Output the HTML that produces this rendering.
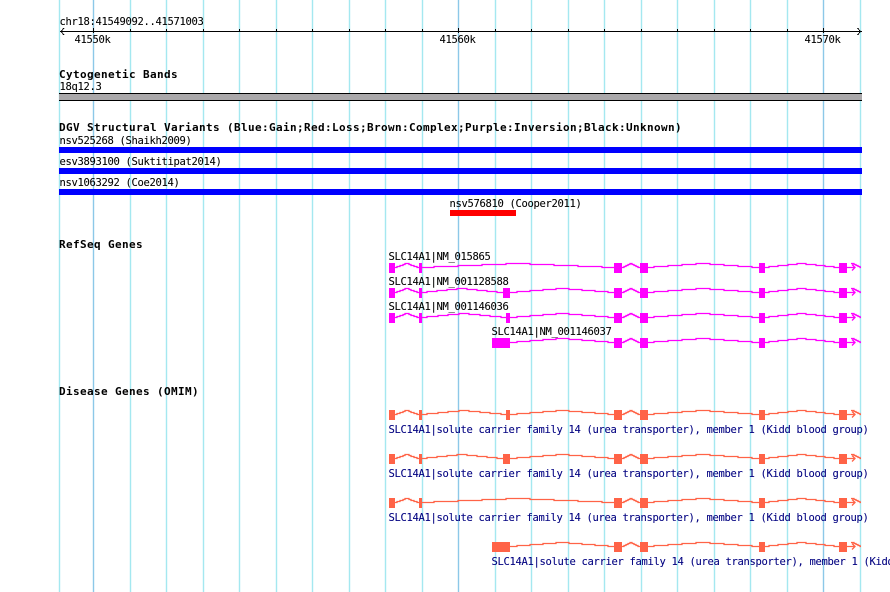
<!DOCTYPE html>
<html>
<head>
<meta charset="utf-8">
<title>chr18:41549092..41571003</title>
<style>
html,body{margin:0;padding:0;background:#fff;width:890px;height:592px;overflow:hidden}
svg{display:block;position:absolute;left:0;top:0}
text{font-family:"DejaVu Sans Mono","Liberation Mono",monospace;font-size:10.5px;letter-spacing:-.321px;fill:#000;stroke:#000;stroke-width:.08px;white-space:pre}
text.b{font-weight:bold;font-size:11px;letter-spacing:.378px;stroke-width:0}
text.n{fill:#000080;stroke:#000080}
</style>
</head>
<body>
<svg width="890" height="592" viewBox="0 0 890 592" xmlns="http://www.w3.org/2000/svg">
<defs>
<g id="tail">
<path d="M614 0h8v10h-8zM640 0h8v10h-8zM759 0h6v10h-6zM839 0h8v10h-8z" fill="currentColor" shape-rendering="crispEdges"/>
<path d="M622 4.5H624V3.5H626V2.5H628V1.5H630V.5H632V1.5H634V2.5H636V3.5H638V4.5H640M648 4.5H654V3.5H668V2.5H682V1.5H696V.5H710V1.5H724V2.5H738V3.5H752V4.5H759M765 4.5H769V3.5H778V2.5H788V1.5H797V.5H806V1.5H816V2.5H825V3.5H834V4.5H839M847 4.5H855M851 .5H854V1.5H856V2.5H858V3.5H860V4.5H861M852 1.5L855 4.5L852 7.5" fill="none" stroke="currentColor" stroke-width="1.3"/>
</g>
<g id="head">
<path d="M389 0h6v10h-6zM419 0h3v10h-3z" fill="currentColor" shape-rendering="crispEdges"/>
<path d="M395 4.5H397V3.5H400V2.5H403V1.5H405V.5H409V1.5H411V2.5H414V3.5H417V4.5H419" fill="none" stroke="currentColor" stroke-width="1.3"/>
</g>
<g id="a">
<use href="#head"/><use href="#tail"/>
<path d="M422 4.5H434V3.5H458V2.5H482V1.5H506V.5H530V1.5H554V2.5H578V3.5H602V4.5H614" fill="none" stroke="currentColor" stroke-width="1.3"/>
</g>
<g id="b">
<use href="#head"/><use href="#tail"/>
<path d="M503 0h7v10h-7z" fill="currentColor" shape-rendering="crispEdges"/>
<path d="M422 4.5H427V3.5H437V2.5H447V1.5H457V.5H467V1.5H477V2.5H487V3.5H497V4.5H503M510 4.5H517V3.5H530V2.5H543V1.5H556V.5H569V1.5H582V2.5H595V3.5H608V4.5H614" fill="none" stroke="currentColor" stroke-width="1.3"/>
</g>
<g id="c">
<use href="#head"/><use href="#tail"/>
<path d="M506 0h4v10h-4z" fill="currentColor" shape-rendering="crispEdges"/>
<path d="M422 4.5H427V3.5H438V2.5H448V1.5H459V.5H469V1.5H480V2.5H490V3.5H501V4.5H506M510 4.5H517V3.5H530V2.5H543V1.5H556V.5H569V1.5H582V2.5H595V3.5H608V4.5H614" fill="none" stroke="currentColor" stroke-width="1.3"/>
</g>
<g id="d">
<use href="#tail"/>
<path d="M492 0h18v10h-18z" fill="currentColor" shape-rendering="crispEdges"/>
<path d="M510 4.5H517V3.5H530V2.5H543V1.5H556V.5H569V1.5H582V2.5H595V3.5H608V4.5H614" fill="none" stroke="currentColor" stroke-width="1.3"/>
</g>
</defs>

<!-- grid -->
<g fill="none" stroke="#a4e8f0" stroke-width="1.4">
<path d="M59.5 0V592M130.5 0V592M166.5 0V592M203.5 0V592M239.5 0V592M276.5 0V592M312.5 0V592M349.5 0V592M385.5 0V592M422.5 0V592M495.5 0V592M531.5 0V592M568.5 0V592M604.5 0V592M641.5 0V592M677.5 0V592M714.5 0V592M750.5 0V592M787.5 0V592M860.5 0V592"/>
<path d="M93.5 0V592M458.5 0V592M823.5 0V592" stroke="#8cc8e8"/>
</g>

<!-- ruler -->
<text x="59.5" y="25">chr18:41549092..41571003</text>
<g shape-rendering="crispEdges" fill="none" stroke="#000">
<path d="M60 31.5H862"/>
<path d="M64 28L61 31.5L64 35M857.5 28L860.5 31.5L857.5 35"/>
<path d="M130.5 29v3M166.5 29v3M203.5 29v3M239.5 29v3M276.5 29v3M312.5 29v3M349.5 29v3M385.5 29v3M422.5 29v3M495.5 29v3M531.5 29v3M568.5 29v3M604.5 29v3M641.5 29v3M677.5 29v3M714.5 29v3M750.5 29v3M787.5 29v3"/>
<path d="M93.5 28v5M458.5 28v5M823.5 28v5"/>
</g>
<text x="74.5" y="43">41550k</text>
<text x="439.5" y="43">41560k</text>
<text x="804.5" y="43">41570k</text>

<!-- cytogenetic -->
<text class="b" x="59" y="78">Cytogenetic Bands</text>
<text x="59.5" y="90">18q12.3</text>
<g shape-rendering="crispEdges">
<rect x="59" y="93" width="803" height="8" fill="#000"/>
<rect x="59" y="94" width="803" height="6" fill="#aaa8aa"/>
</g>

<!-- DGV -->
<text class="b" x="59" y="131">DGV Structural Variants (Blue:Gain;Red:Loss;Brown:Complex;Purple:Inversion;Black:Unknown)</text>
<text x="59.5" y="144">nsv525268 (Shaikh2009)</text>
<text x="59.5" y="165">esv3893100 (Suktitipat2014)</text>
<text x="59.5" y="186">nsv1063292 (Coe2014)</text>
<text x="449.5" y="207">nsv576810 (Cooper2011)</text>
<g shape-rendering="crispEdges">
<rect x="59" y="147" width="803" height="6" fill="#0000ff"/>
<rect x="59" y="168" width="803" height="6" fill="#0000ff"/>
<rect x="59" y="189" width="803" height="6" fill="#0000ff"/>
<rect x="450" y="210" width="66" height="6" fill="#ff0000"/>
</g>

<!-- RefSeq -->
<text class="b" x="59" y="248">RefSeq Genes</text>
<text x="388.5" y="260">SLC14A1|NM_015865</text>
<text x="388.5" y="285">SLC14A1|NM_001128588</text>
<text x="388.5" y="310">SLC14A1|NM_001146036</text>
<text x="491.5" y="335">SLC14A1|NM_001146037</text>
<g color="#ff00ff">
<use href="#a" y="263"/>
<use href="#b" y="288"/>
<use href="#c" y="313"/>
<use href="#d" y="338"/>
</g>

<!-- OMIM -->
<text class="b" x="59" y="395">Disease Genes (OMIM)</text>
<g color="#ff6347">
<use href="#c" y="410"/>
<use href="#b" y="454"/>
<use href="#a" y="498"/>
<use href="#d" y="542"/>
</g>
<text class="n" x="388.5" y="433">SLC14A1|solute carrier family 14 (urea transporter), member 1 (Kidd blood group)</text>
<text class="n" x="388.5" y="477">SLC14A1|solute carrier family 14 (urea transporter), member 1 (Kidd blood group)</text>
<text class="n" x="388.5" y="521">SLC14A1|solute carrier family 14 (urea transporter), member 1 (Kidd blood group)</text>
<text class="n" x="491.5" y="565">SLC14A1|solute carrier family 14 (urea transporter), member 1 (Kidd blood group)</text>
</svg>
</body>
</html>
